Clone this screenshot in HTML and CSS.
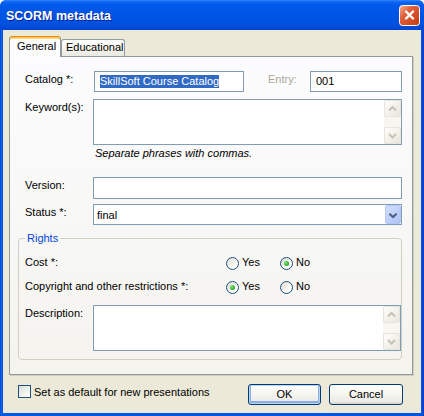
FILE: index.html
```html
<!DOCTYPE html>
<html lang="en">
<head>
<meta charset="utf-8">
<title>SCORM metadata</title>
<link rel="stylesheet" href="styles.css">
</head>
<body>
<div class="window">
  <div class="titlebar">
    <span class="title">SCORM metadata</span>
    <span class="close" aria-label="Close">
      <svg width="21" height="21" viewBox="0 0 21 21">
        <defs>
          <linearGradient id="cg" x1="0" y1="0" x2="1" y2="1">
            <stop offset="0" stop-color="#F6B396"/>
            <stop offset="0.35" stop-color="#E2603A"/>
            <stop offset="1" stop-color="#C23A10"/>
          </linearGradient>
        </defs>
        <rect x="0.5" y="0.5" width="20" height="20" rx="3" fill="url(#cg)" stroke="#fff"/>
        <path d="M7 6.5 L14 13.5 M14 6.5 L7 13.5" stroke="#fff" stroke-width="2.4" stroke-linecap="round"/>
      </svg>
    </span>
  </div>

  <div class="client">
    <div class="tabs">
      <div class="tab active">General</div>
      <div class="tab">Educational</div>
    </div>

    <div class="panel">
      <div class="row">
        <span class="lbl">Catalog *:</span>
        <div class="field catalog"><span class="sel">SkillSoft Course Catalog</span></div>
        <span class="lbl entry-lbl">Entry:</span>
        <div class="field entry">001</div>
      </div>

      <div class="row mt7">
        <span class="lbl">Keyword(s):</span>
        <div class="area">
          <div class="vscroll">
            <span class="sb"><svg width="15" height="15" viewBox="0 0 15 15"><polyline points="4,9.5 7.5,6 11,9.5" fill="none" stroke="#C6C3B4" stroke-width="2"/></svg></span>
            <span class="sb"><svg width="15" height="15" viewBox="0 0 15 15"><polyline points="4,6 7.5,9.5 11,6" fill="none" stroke="#C6C3B4" stroke-width="2"/></svg></span>
          </div>
        </div>
      </div>
      <div class="hint">Separate phrases with commas.</div>

      <div class="row mt17">
        <span class="lbl">Version:</span>
        <div class="field wide version"></div>
      </div>

      <div class="row mt5">
        <span class="lbl">Status *:</span>
        <div class="field wide combo">
          <span class="combo-text">final</span>
          <span class="drop"><svg width="15" height="19" viewBox="0 0 15 19"><polyline points="3.6,7.6 7.5,11.2 11.4,7.6" fill="none" stroke="#4D6185" stroke-width="2.2"/></svg></span>
        </div>
      </div>

      <fieldset class="group">
        <legend>Rights</legend>
        <div class="row opt first">
          <span class="lbl long">Cost *:</span>
          <span class="choice"><span class="radio"></span>Yes</span>
          <span class="choice"><span class="radio on"></span>No</span>
        </div>
        <div class="row opt second">
          <span class="lbl long">Copyright and other restrictions *:</span>
          <span class="choice"><span class="radio on"></span>Yes</span>
          <span class="choice"><span class="radio"></span>No</span>
        </div>
        <div class="row mt11">
          <span class="lbl">Description:</span>
          <div class="area">
            <div class="vscroll">
              <span class="sb"><svg width="15" height="15" viewBox="0 0 15 15"><polyline points="4,9.5 7.5,6 11,9.5" fill="none" stroke="#C6C3B4" stroke-width="2"/></svg></span>
              <span class="sb"><svg width="15" height="15" viewBox="0 0 15 15"><polyline points="4,6 7.5,9.5 11,6" fill="none" stroke="#C6C3B4" stroke-width="2"/></svg></span>
            </div>
          </div>
        </div>
      </fieldset>
    </div>

    <div class="footer">
      <span class="check"></span>
      <span class="check-label">Set as default for new presentations</span>
      <div class="buttons">
        <span class="btn default">OK</span>
        <span class="btn">Cancel</span>
      </div>
    </div>
  </div>
</div>
</body>
</html>
```

FILE: styles.css
```css
* { box-sizing: border-box; }
html, body { margin: 0; padding: 0; background: #ffffff; }
body {
  font-family: "Liberation Sans", Arial, sans-serif;
  font-size: 11px;
  line-height: 13px;
  color: #000;
}

.window {
  width: 424px;
  height: 416px;
  display: flex;
  flex-direction: column;
  background: linear-gradient(to right, #0831D9 0, #166AEE 1px, #0058E6 2px, #0055E5 421px, #0A48D0 423px, #0831D9 424px);
  border-radius: 6px 6px 0 0;
  overflow: hidden;
}

.titlebar {
  height: 30px;
  flex: none;
  display: flex;
  align-items: flex-start;
  background: linear-gradient(to bottom, #3A8CF8 0, #1A6EF5 1px, #0860EE 3px, #0058EB 6px, #0055E6 14px, #0053E2 22px, #004BD8 27px, #0044CE 30px);
  border-radius: 6px 6px 0 0;
}
.title {
  margin: 9px 0 0 6px;
  font-size: 12.5px;
  line-height: 15px;
  font-weight: bold;
  color: #fff;
  text-shadow: 1px 1px 0 #0F1F8F;
}
.close {
  margin: 5px 4px 0 auto;
  width: 21px;
  height: 21px;
  display: block;
}
.close svg { display: block; }

.client {
  flex: 1;
  margin: 0 3px 3px 3px;
  background: #ECE9D8;
  padding: 6px 0 0 6px;
  display: flex;
  flex-direction: column;
}

.tabs {
  height: 20px;
  display: flex;
  align-items: flex-end;
}
.tab {
  height: 17px;
  padding: 1px 0 0 4px;
  width: 64px;
  border: 1px solid #919B9C;
  border-bottom: none;
  border-radius: 3px 3px 0 0;
  background: linear-gradient(#FFFFFF, #F3F2EC 60%, #E9E8E2);
}
.tab.active {
  position: relative;
  z-index: 1;
  width: 52px;
  height: 21px;
  margin-bottom: -1px;
  padding: 3px 0 0 7px;
  background: #FCFCFE;
  border-top: 1px solid #E68B2C;
  box-shadow: inset 0 1px 0 #FFC73C, inset 0 2px 0 #FFD98A;
}

.panel {
  width: 404px;
  border: 1px solid #919B9C;
  background: linear-gradient(#FCFCFE, #F4F3EE);
  padding: 14px 10px 14px 15px;
  box-shadow: 1px 1px 0 #D0CEC1;
  display: flex;
  flex-direction: column;
}

.row {
  display: flex;
  align-items: flex-start;
}
.mt5 { margin-top: 5px; }
.mt7 { margin-top: 7px; }
.mt11 { margin-top: 11px; }
.mt17 { margin-top: 17px; }

.lbl {
  flex: none;
  width: 68px;
  padding-top: 2px;
  white-space: nowrap;
}
.lbl.long {
  width: 201px;
  padding-top: 0;
}
.entry-lbl {
  flex: 1;
  width: auto;
  margin-left: 24px;
  color: #ACA899;
}

.field {
  height: 21px;
  border: 1px solid #7F9DB9;
  background: #fff;
  padding: 3px 5px 0;
  white-space: nowrap;
  overflow: hidden;
}
.catalog {
  width: 150px;
  margin-left: 1px;
}
.sel {
  display: inline-block;
  background: #316AC5;
  color: #fff;
  line-height: 13px;
}
.entry { width: 92px; }
.wide { flex: 1; }
.version { height: 22px; }

.combo {
  display: flex;
  padding: 0;
}
.combo-text {
  flex: 1;
  padding: 4px 0 0 3px;
}
.drop {
  width: 16px;
  height: 19px;
  flex: none;
  border: 1px solid #B5C8F3;
  border-radius: 2px;
  background: linear-gradient(135deg, #D2DEFD, #BCCEF9 60%, #AEC3F4);
  display: flex;
  justify-content: center;
}
.drop svg { display: block; }

.area {
  flex: 1;
  height: 46px;
  border: 1px solid #7F9DB9;
  background: #fff;
  display: flex;
  justify-content: flex-end;
}
.vscroll {
  width: 17px;
  background: #F7F6F1;
  display: flex;
  flex-direction: column;
  justify-content: space-between;
}
.sb {
  width: 17px;
  height: 17px;
  border: 1px solid #E6E4DB;
  border-radius: 2px;
  background: linear-gradient(135deg, #FDFDFB, #F1EFE8 60%, #E7E5DC);
  display: block;
}
.sb svg { display: block; }

.hint {
  margin: 2px 0 0 70px;
  font-style: italic;
}

.group {
  margin: 7px 0 0 -7px;
  padding: 0 0 8px 6px;
  border: 1px solid #D0D0BF;
  border-radius: 4px;
  min-inline-size: 0;
}
.group legend {
  padding: 0 2px;
  color: #0046D5;
  line-height: 13px;
}
.opt { align-items: flex-start; }
.opt.first { margin-top: 11px; }
.opt.second { margin-top: 10px; }

.choice {
  width: 54px;
  display: flex;
  align-items: flex-start;
  gap: 3px;
}
.radio {
  flex: none;
  width: 13px;
  height: 13px;
  margin-top: 1px;
  border: 1px solid #1C5180;
  border-radius: 50%;
  background: linear-gradient(135deg, #DCD9CD, #F6F5F0 55%, #FFFFFF);
  display: flex;
  align-items: center;
  justify-content: center;
}
.radio.on::after {
  content: "";
  width: 5px;
  height: 5px;
  border-radius: 50%;
  background: radial-gradient(circle at 35% 35%, #7CE37A, #2AAA28 70%, #1F8E1D);
}
.choice { line-height: 13px; }
.row.opt .choice { padding-top: 0; }

.footer {
  margin-top: 9px;
  display: flex;
  align-items: flex-start;
  padding-right: 18px;
}
.check {
  flex: none;
  width: 13px;
  height: 13px;
  margin: 1px 0 0 9px;
  border: 1px solid #1C5180;
  background: linear-gradient(135deg, #DCDCD7, #F3F3EF 60%, #FFFFFF);
}
.check-label {
  margin-left: 3px;
  padding-top: 2px;
}
.buttons {
  margin-left: auto;
  display: flex;
  gap: 8px;
}
.btn {
  width: 73px;
  height: 21px;
  border: 1px solid #003C74;
  border-radius: 3px;
  background: linear-gradient(#FFFFFF, #F7F7F3 40%, #ECEBE6 85%, #D6D0C5);
  display: flex;
  align-items: center;
  justify-content: center;
}
.btn.default {
  box-shadow: inset 0 0 0 1px #BCD4F6, inset 0 -1px 0 2px #89ADE4;
}
.btn + .btn { width: 74px; }
```
